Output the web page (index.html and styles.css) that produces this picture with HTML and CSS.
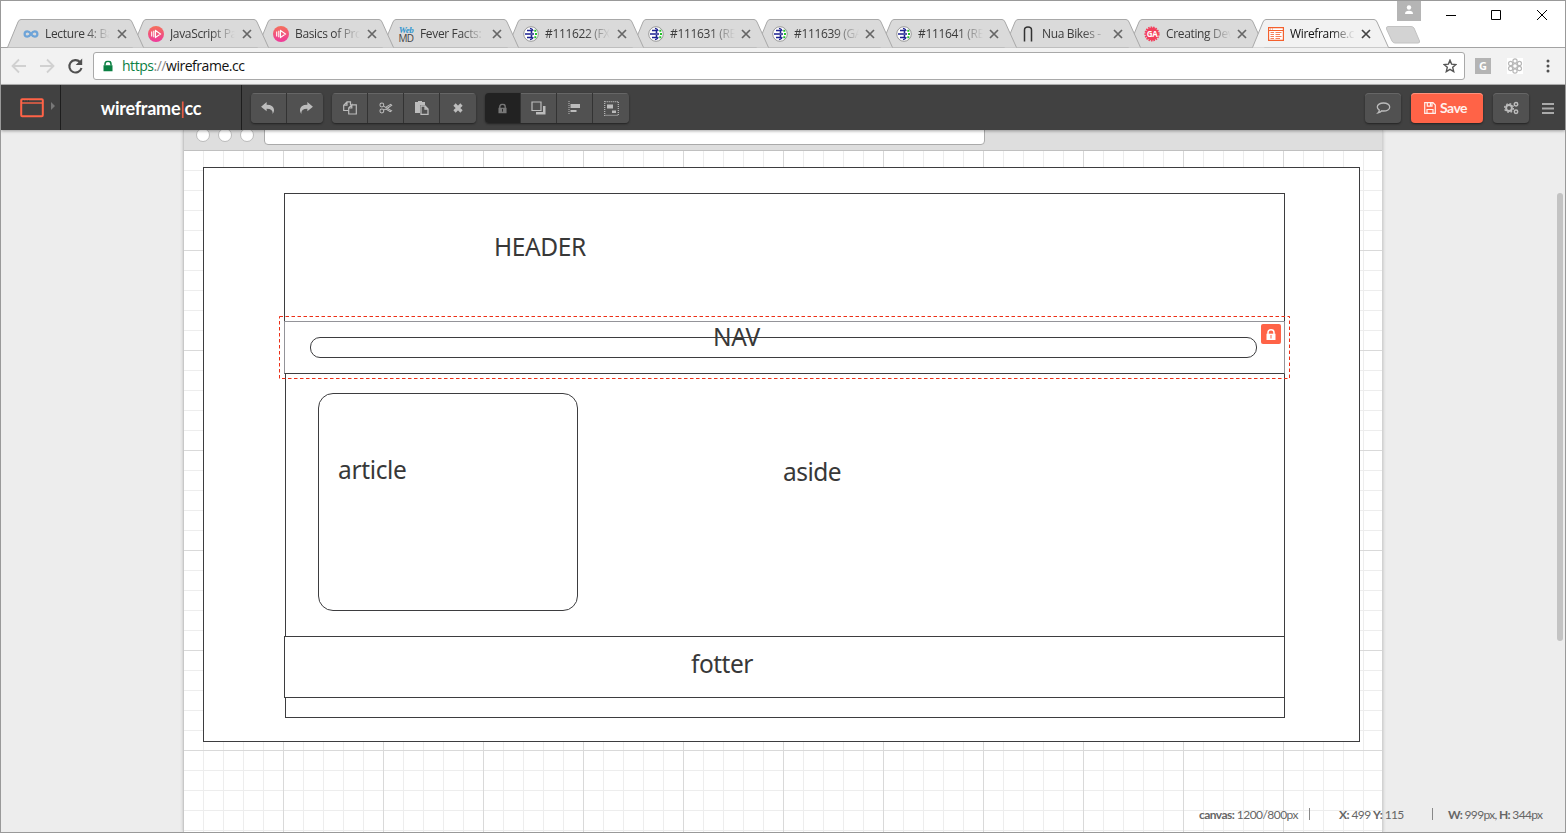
FILE: index.html
```
<!DOCTYPE html>
<html lang="en">
<head>
<meta charset="utf-8">
<title>Wireframe.cc</title>
<link rel="stylesheet" href="styles.css">
</head>
<body>
<svg class="defs" width="0" height="0">
  <defs>
    <linearGradient id="pink" x1="0" y1="0" x2="0" y2="1"><stop offset="0" stop-color="#f5705a"/><stop offset="1" stop-color="#ee3a9c"/></linearGradient>
    <symbol id="tabshape" viewBox="0 0 138 29"><path d="M.5 28.500L11 3Q12 .5 14 .5H122Q124 .5 125 3L136.500 28.500"/></symbol>
    <symbol id="close" viewBox="0 0 10 10"><path d="M1 1L9 9M9 1L1 9" fill="none" stroke="currentColor" stroke-width="1.700"/></symbol>
    <symbol id="play" viewBox="0 0 16 16"><circle cx="8" cy="8" r="8" fill="url(#pink)"/><path d="M3.700 5.500V10.500M5.800 4.800V11.200M7.500 4.500L12.500 8L7.500 11.500Z" fill="none" stroke="#fff" stroke-width="1.100"/></symbol>
    <symbol id="plug" viewBox="0 0 16 16"><circle cx="8" cy="8" r="7.300" fill="#fff" stroke="#999" stroke-width="1"/><path d="M4 4.500H8.500V7M2 8H11M4 11.500H8.500V9" fill="none" stroke="#1d2290" stroke-width="1.600"/><path d="M7 2.300Q10 3 10 5M7 13.700Q10 13 10 11" fill="none" stroke="#1d2290" stroke-width="1.200"/><path d="M11.300 4.800H13.300M12 8H14M11.300 11.200H13.300" stroke="#25c02b" stroke-width="2"/></symbol>
    <symbol id="reply" viewBox="0 0 16 14"><path d="M0 5L6 0V3Q14 3 14 9Q14 11 12.500 13Q13 7.200 6 7.200V10Z"/></symbol>
    <symbol id="lock" viewBox="0 0 10 11"><path d="M2 5V3.500Q2 .8 5 .8T8 3.500V5" fill="none" stroke="currentColor" stroke-width="1.500"/><path d="M.5 4.700H9.500V11H.5Z" fill="currentColor"/></symbol>
  </defs>
</svg>
<div class="window">
  <header class="titlebar">
    <nav class="tabs">
      <div class="tab z11"><svg class="shape"><use href="#tabshape"/></svg><svg class="fav" viewBox="0 0 16 16"><path d="M8 8C6.800 6.300 6 5.300 4.300 5.300A2.700 2.700 0 0 0 4.300 10.700C6 10.700 6.800 9.700 8 8S10 5.300 11.700 5.300A2.700 2.700 0 0 1 11.700 10.700C10 10.700 9.200 9.700 8 8Z" fill="none" stroke="#6ea4d8" stroke-width="2.200"/></svg><span class="label">Lecture 4: Ba</span><svg class="x"><use href="#close"/></svg></div>
      <div class="tab z10"><svg class="shape"><use href="#tabshape"/></svg><svg class="fav"><use href="#play"/></svg><span class="label">JavaScript Pa</span><svg class="x"><use href="#close"/></svg></div>
      <div class="tab z9"><svg class="shape"><use href="#tabshape"/></svg><svg class="fav"><use href="#play"/></svg><span class="label">Basics of Pro</span><svg class="x"><use href="#close"/></svg></div>
      <div class="tab z8"><svg class="shape"><use href="#tabshape"/></svg><span class="webmd"><i>Web</i><b>MD</b></span><span class="label">Fever Facts:</span><svg class="x"><use href="#close"/></svg></div>
      <div class="tab z7"><svg class="shape"><use href="#tabshape"/></svg><svg class="fav"><use href="#plug"/></svg><span class="label">#111622 (FX</span><svg class="x"><use href="#close"/></svg></div>
      <div class="tab z6"><svg class="shape"><use href="#tabshape"/></svg><svg class="fav"><use href="#plug"/></svg><span class="label">#111631 (RE</span><svg class="x"><use href="#close"/></svg></div>
      <div class="tab z5"><svg class="shape"><use href="#tabshape"/></svg><svg class="fav"><use href="#plug"/></svg><span class="label">#111639 (GA</span><svg class="x"><use href="#close"/></svg></div>
      <div class="tab z4"><svg class="shape"><use href="#tabshape"/></svg><svg class="fav"><use href="#plug"/></svg><span class="label">#111641 (RE</span><svg class="x"><use href="#close"/></svg></div>
      <div class="tab z3"><svg class="shape"><use href="#tabshape"/></svg><svg class="fav" viewBox="0 0 16 16"><path d="M4.500 15.500V4Q4.500 1 8 1T11.500 4V15.500" fill="none" stroke="#333" stroke-width="1.500"/></svg><span class="label">Nua Bikes -</span><svg class="x"><use href="#close"/></svg></div>
      <div class="tab z2"><svg class="shape"><use href="#tabshape"/></svg><span class="ga"><svg viewBox="0 0 16 16"><circle cx="8" cy="8" r="6.500" fill="#f33e5b"/><circle cx="8" cy="8" r="6.700" fill="none" stroke="#f33e5b" stroke-width="1.800" stroke-dasharray="1.500 1"/></svg><b>GA</b></span><span class="label">Creating Dev</span><svg class="x"><use href="#close"/></svg></div>
      <div class="tab active"><svg class="shape"><use href="#tabshape"/></svg><svg class="fav" viewBox="0 0 16 16"><path d="M.6 1.600H15.400V14.400H.6Z" fill="#fff" stroke="#f4602d" stroke-width="1.200"/><path d="M.6 4.500H15.400" stroke="#f4602d"/><path d="M2 3H3M4 3H5M2.500 6.500H6M2.500 8.500H6M2.500 10.500H6M2.500 12.500H6M7.500 6.500H13.500M7.500 8.500H12M7.500 10.500H13.500M7.500 12.500H12" stroke="#f4602d" stroke-width=".8"/></svg><span class="label">Wireframe.cc</span><svg class="x"><use href="#close"/></svg></div>
    </nav>
    <svg class="newtab" viewBox="0 0 36 18"><path d="M3 .5H26Q28 .5 29 2L34.500 15Q35 17 33 17H10Q8 17 7 15L1.500 3Q1 .5 3 .5Z" fill="#d3d3d3" stroke="#c2c2c2"/></svg>
    <div class="profile"><svg width="12" height="12" viewBox="0 0 12 12"><circle cx="6" cy="3.500" r="2.200" fill="#fff"/><path d="M2 10Q2 6.800 6 6.800T10 10Z" fill="#fff"/></svg></div>
    <svg class="winctl" width="104" height="12" viewBox="0 0 104 12" fill="none" stroke="#000"><path d="M0 6.500H10M91 1L101 11M101 1L91 11"/><path d="M45.500 1.500H54.500V10.500H45.500Z"/></svg>
  </header>
  <div class="toolbar">
    <svg class="nav" width="74" height="18" viewBox="0 0 74 18" fill="none"><path d="M15 9H2M8 2.500L1.500 9L8 15.500M29 9H42M36 2.500L42.500 9L36 15.500" stroke="#d1d1d1" stroke-width="1.800"/><path d="M69 5A6.200 6.200 0 1 0 70.500 11" stroke="#505050" stroke-width="2.100"/><path d="M71.200 1.500V8H64.700Z" fill="#505050"/></svg>
    <div class="omnibox">
      <svg width="10" height="12" viewBox="0 0 10 11" class="securelock"><use href="#lock"/></svg>
      <span class="url"><em>https</em><i>://</i>wireframe.cc</span>
      <svg class="star" width="14" height="14" viewBox="0 0 14 14"><path d="M7 1.200L8.600 5.100L13 5.500L9.700 8.300L10.700 12.600L7 10.300L3.300 12.600L4.300 8.300L1 5.500L5.400 5.100Z" fill="none" stroke="#555" stroke-width="1.400"/></svg>
    </div>
    <span class="gext">G</span>
    <span class="flower"><svg width="16" height="16" viewBox="0 0 16 16" fill="none" stroke="#b8b8b8" stroke-width="1.200"><circle cx="8" cy="8" r="2.400"/><circle cx="8" cy="3" r="2.100"/><circle cx="8" cy="13" r="2.100"/><circle cx="3.600" cy="5.500" r="2.100"/><circle cx="12.400" cy="5.500" r="2.100"/><circle cx="3.600" cy="10.500" r="2.100"/><circle cx="12.400" cy="10.500" r="2.100"/></svg></span>
    <svg class="dots" width="4" height="14" viewBox="0 0 4 14" fill="#505050"><circle cx="2" cy="2" r="1.500"/><circle cx="2" cy="7" r="1.500"/><circle cx="2" cy="12" r="1.500"/></svg>
  </div>
  <div class="appbar">
    <div class="device"><svg width="36" height="20" viewBox="0 0 36 20"><rect x="1.200" y="1.200" width="21.600" height="17" rx="1" fill="none" stroke="#ff6347" stroke-width="2"/><path d="M1 5H23" stroke="#ff6347" stroke-width="1.400"/><path d="M3 3H4M5.500 3H6.500M8 3H9" stroke="#333"/><path d="M31 4L35 8L31 12Z" fill="#777"/></svg></div>
    <div class="logo">wireframe<i>|</i>cc</div>
    <div class="groups">
      <div class="group">
        <button class="btn"><svg width="15" height="13" viewBox="0 0 15 13"><use href="#reply" width="15" height="13"/></svg></button>
        <button class="btn"><svg class="flip" width="15" height="13" viewBox="0 0 15 13"><use href="#reply" width="15" height="13"/></svg></button>
      </div>
      <div class="group">
        <button class="btn"><svg width="14" height="14" viewBox="0 0 14 14" fill="none" stroke="currentColor" stroke-width="1.200"><path d="M5.500 9.500H.7V4.200L4 .9H7.500V4M4 1V4.200H.7"/><path d="M8.800 3.800H13.300V13H5.700V7L8.800 3.800V7H5.700"/></svg></button>
        <button class="btn"><svg width="14" height="12" viewBox="0 0 15 13" fill="none" stroke="currentColor" stroke-width="1.100"><circle cx="3" cy="3.200" r="2.100"/><circle cx="3" cy="9.800" r="2.100"/><path d="M4.800 4.500L13.500 9.500L12 10.500L7.500 7.700L4.800 8.800M7.500 5.500L12.500 2.500L13.700 3.400L9 6.800"/></svg></button>
        <button class="btn"><svg width="14" height="14" viewBox="0 0 14 14"><path d="M0 1H3V0H7V1H10V4H5V12H0Z"/><path d="M6 5H10L13 8V13.300H6ZM10 5V8H13" fill="#505050" stroke="currentColor" stroke-width="1.300"/></svg></button>
        <button class="btn"><svg width="10" height="10" viewBox="0 0 10 10"><path d="M1.500 1.500L8.500 8.500M8.500 1.500L1.500 8.500" stroke="currentColor" stroke-width="3.200"/></svg></button>
      </div>
      <div class="group">
        <button class="btn pressed"><svg width="9" height="11" viewBox="0 0 10 11"><use href="#lock"/><path d="M5 6V9" stroke="#222"/></svg></button>
        <button class="btn"><svg width="15" height="14" viewBox="0 0 15 14"><path d="M1 1H10V9.500H1Z" fill="none" stroke="currentColor" stroke-width="1.200"/><path d="M12 5H14.500V13.500H5V11H12Z"/></svg></button>
        <button class="btn"><svg width="13" height="14" viewBox="0 0 13 14"><path d="M1 0V14" stroke="currentColor" stroke-dasharray="1 1"/><path d="M2.500 3H12V7H2.500ZM2.500 9H8.500V11H2.500Z"/></svg></button>
        <button class="btn"><svg width="15" height="15" viewBox="0 0 15 15"><rect x=".7" y=".7" width="13.600" height="13.600" fill="none" stroke="currentColor" stroke-width="1.200" stroke-dasharray="1 1"/><path d="M3 3.500H9V7.500H3ZM8 9.500H12V12H8Z"/></svg></button>
      </div>
    </div>
    <div class="right">
      <button class="btn solo"><svg width="15" height="12" viewBox="0 0 15 12"><path d="M7.500 1C11 1 13.700 2.700 13.700 5S11 9 7.500 9Q6.500 9 5.800 8.800Q4.300 10.500 2 10.900Q3.400 9.500 3.300 8Q1.300 6.800 1.300 5C1.300 2.700 4 1 7.500 1Z" fill="none" stroke="currentColor" stroke-width="1.300"/></svg></button>
      <button class="save"><svg width="12" height="12" viewBox="0 0 12 12" fill="none" stroke="currentColor" stroke-width="1.200"><path d="M.7.7H9L11.300 3V11.300H.7ZM3 11V7.500H9V11M3.300 1V4.200H8V1M6.500 1V3.500"/></svg>Save</button>
      <button class="btn solo"><svg width="15" height="14" viewBox="0 0 15 14" fill="none" stroke="currentColor"><circle cx="5" cy="7" r="2.900" stroke-width="2"/><circle cx="5" cy="7" r="4.400" stroke-width="1.300" stroke-dasharray="1.700 1.750"/><circle cx="12" cy="3.200" r="1.700" stroke-width="1.500"/><circle cx="12" cy="10.800" r="1.700" stroke-width="1.500"/></svg></button>
      <svg class="menu" width="12" height="11" viewBox="0 0 12 11"><path d="M0 1H12M0 5.500H12M0 10H12" stroke="#aaa" stroke-width="1.800"/></svg>
    </div>
  </div>
  <main class="workspace">
    <section class="canvas">
      <div class="chrome"><span class="dot"></span><span class="dot"></span><span class="dot"></span><span class="field"></span></div>
      <div class="box page"></div>
      <div class="box header"></div>
      <div class="box content"></div>
      <div class="box navbox"></div>
      <div class="box footer"></div>
      <div class="box pill"></div>
      <div class="box article"></div>
      <svg class="selection" width="1011" height="63"><rect x=".5" y=".5" width="1010" height="62" fill="none" stroke="#ec2f17" stroke-dasharray="3.500 2.500"/></svg>
      <span class="badge"><svg width="10" height="11" viewBox="0 0 10 11"><use href="#lock"/><path d="M5 6V9.500" stroke="#ff6347"/></svg></span>
      <span class="text t-header">HEADER</span>
      <span class="text t-nav">NAV</span>
      <span class="text t-article">article</span>
      <span class="text t-aside">aside</span>
      <span class="text t-footer">fotter</span>
    </section>
    <div class="scroll"></div>
    <footer class="status"><span class="s1"><b>canvas:</b> 1200/800px</span><span class="s2"><b>X:</b> 499 <b>Y:</b> 115</span><span class="s3"><b>W:</b> 999px, <b>H:</b> 344px</span></footer>
  </main>
</div>
</body>
</html>
```
FILE: styles.css
```
* { box-sizing: border-box; }
body { margin: 0; font-family: "Open Sans", "Noto Sans", sans-serif; }
button { font: inherit; margin: 0; padding: 0; border: 0; }
svg { display: block; flex: none; }
.defs { position: absolute; }
.window { width: 1566px; height: 833px; border: 1px solid #999; background: #fff; display: flex; flex-direction: column; overflow: hidden; }

.titlebar { position: relative; height: 47px; flex: none; padding: 18px 0 0 6px; box-shadow: inset 0 -1px #a3a3a3; }
.tabs { display: flex; }
.tab { position: relative; isolation: isolate; flex: none; width: 125px; height: 29px; padding-left: 16px; display: flex; align-items: center; color: #3b3b3b; font-size: 12px; }
.tab:nth-child(n+6) { width: 124px; }
.shape { position: absolute; left: 0; top: 0; width: 138px; height: 29px; z-index: -1; fill: #dadada; stroke: #a8a8a8; }
.z11 { z-index: 11; } .z10 { z-index: 10; } .z9 { z-index: 9; } .z8 { z-index: 8; } .z7 { z-index: 7; } .z6 { z-index: 6; }
.z5 { z-index: 5; } .z4 { z-index: 4; } .z3 { z-index: 3; } .z2 { z-index: 2; }
.tab.active { z-index: 12; color: #111; }
.active .shape { fill: #f2f2f2; }
.fav { width: 16px; height: 16px; }
.label { width: 72px; margin-left: 6px; white-space: nowrap; line-height: 17px; letter-spacing: -.35px; -webkit-mask-image: linear-gradient(90deg, #000 40px, transparent 65px); mask-image: linear-gradient(90deg, #000 40px, transparent 65px); }
.tab:nth-child(n+6) .label { width: 71px; }
.x { width: 10px; height: 10px; color: #666; }
.active .x { color: #444; }
.webmd { width: 16px; display: flex; flex-direction: column; align-items: center; font: 10px/8px "Open Sans", sans-serif; letter-spacing: -.5px; color: #444; }
.webmd i { font: italic 700 9px/8px "Liberation Serif", serif; color: #2f95d0; }
.webmd b { font-weight: 400; line-height: 8px; }
.ga { position: relative; width: 16px; height: 16px; }
.ga b { position: absolute; left: 0; top: 0; width: 16px; text-align: center; font: 700 8px/16px "Open Sans", sans-serif; letter-spacing: -.5px; color: #fff; }
.newtab { position: absolute; left: 1384px; top: 25px; width: 36px; height: 18px; }
.profile { position: absolute; left: 1396px; top: 0; width: 24px; height: 20px; background: #b5b5b5; display: flex; justify-content: center; padding-top: 3px; }
.winctl { position: absolute; left: 1445px; top: 8px; }

.toolbar { height: 37px; flex: none; background: #f2f2f2; border-bottom: 1px solid #b5b5b5; display: flex; align-items: center; padding: 0 15px 0 10px; }
.omnibox { margin-left: 8px; width: 1372px; height: 28px; background: #fff; border: 1px solid #a9a9a9; border-radius: 3px; display: flex; align-items: center; padding: 0 7px 0 9px; }
.securelock { color: #0b8043; }
.url { margin-left: 9px; font-size: 14px; line-height: 20px; letter-spacing: -.47px; flex: 1; color: #111; }
.url em { font-style: normal; color: #0b8043; }
.url i { font-style: normal; color: #888; }
.gext { margin-left: 10px; width: 16px; height: 16px; background: #b4b4b4; color: #fff; font: 700 11px/16px "Open Sans", sans-serif; text-align: center; }
.flower { margin-left: 16px; background: #fff; }
.dots { margin-left: auto; }

.appbar { position: relative; z-index: 2; height: 45px; flex: none; background: #414141; display: flex; align-items: stretch; box-shadow: 0 1px 3px rgba(0,0,0,.35); }
.device { width: 60px; border-right: 1px solid #1d1d1d; padding: 13px 0 0 19px; }
.logo { width: 181px; border-right: 1px solid #1d1d1d; text-align: center; font: 700 18px/46px Lato, sans-serif; letter-spacing: -.25px; color: #fff; }
.logo i { font-style: normal; font-weight: 400; color: #ff6347; }
.groups { display: flex; gap: 9px; padding: 8px 0 0 9px; }
.group { display: flex; height: 30px; border-radius: 4px; overflow: hidden; box-shadow: 0 1px 2px #222; }
.btn { width: 36px; height: 30px; background: #515151; color: #bcbcbc; display: flex; align-items: center; justify-content: center; border-right: 1px solid #333; box-shadow: inset 0 1px #666; }
.btn svg { fill: currentColor; }
.btn svg[fill="none"] { fill: none; }
.btn:last-child { border-right: 0; }
.flip { transform: scaleX(-1); }
.btn.pressed { background: #222; color: #777; box-shadow: none; }
.btn.solo { border: 0; border-radius: 4px; box-shadow: inset 0 1px #666, 0 1px 2px #222; }
.right { margin-left: auto; display: flex; gap: 10px; padding: 8px 11px 0 0; }
.save { width: 72px; height: 30px; border-radius: 4px; background: #ff6347; color: #fff0ec; font: 700 14px/30px Lato, sans-serif; letter-spacing: -.5px; display: flex; align-items: center; justify-content: center; gap: 4px; padding-right: 3px; box-shadow: inset 0 1px #ff927d, 0 1px 2px #222; }
.menu { margin: 10px 0 0 3px; }

.workspace { position: relative; flex: 1; background: #ededed; padding-left: 182px; }
.canvas { position: relative; width: 1200px; height: 702px; border-left: 1px solid #c8c8c8; border-right: 1px solid #d2d2d2; box-shadow: 0 0 3px #bbb; background-color: #fff;
  background-image: linear-gradient(90deg, #d9d9d9 1px, transparent 1px), linear-gradient(#d9d9d9 1px, transparent 1px), linear-gradient(90deg, #ededed 1px, transparent 1px), linear-gradient(#ededed 1px, transparent 1px);
  background-size: 100px 100px, 100px 100px, 20px 20px, 20px 20px; background-position: -1px 20px, -1px 20px, -1px 0, -1px 0; }
.chrome { height: 21px; background: #dedede; border-bottom: 1px solid #c0c0c0; display: flex; gap: 8px; padding-left: 12px; overflow: hidden; }
.dot { width: 14px; height: 14px; margin-top: -2px; border-radius: 50%; background: #fff; border: 1px solid #bbb; }
.field { margin-left: 2px; width: 721px; height: 19px; margin-top: -4px; background: #fff; border: 1px solid #aaa; border-radius: 4px; }
.box { position: absolute; border: 1px solid #3d3d3f; }
.page { left: 19px; top: 37px; width: 1157px; height: 575px; background: #fff; }
.header { left: 100px; top: 63px; width: 1001px; height: 181px; }
.content { left: 101px; top: 243px; width: 1000px; height: 345px; }
.navbox { left: 100px; top: 191px; width: 1001px; height: 53px; border-color: #949499; border-bottom-color: #3d3d3f; background: #fff; }
.footer { left: 100px; top: 506px; width: 1001px; height: 62px; background: #fff; }
.pill { left: 126px; top: 207px; width: 947px; height: 21px; border-radius: 10px; }
.article { left: 134px; top: 263px; width: 260px; height: 218px; border-radius: 15px; }
.selection { position: absolute; left: 95px; top: 186px; }
.badge { position: absolute; left: 1077px; top: 194px; width: 20px; height: 20px; border-radius: 2px; background: #ff6347; color: #fff; display: flex; align-items: center; justify-content: center; }
.text { position: absolute; font-family: "Noto Sans", sans-serif; font-size: 24.500px; line-height: 34px; letter-spacing: -.5px; color: #383838; white-space: nowrap; }
.t-header { left: 310px; top: 100px; letter-spacing: -.4px; }
.t-nav { left: 529px; top: 190px; letter-spacing: -.4px; }
.t-article { left: 154px; top: 323px; letter-spacing: -.35px; }
.t-aside { left: 599px; top: 325px; }
.t-footer { left: 507px; top: 517px; }
.scroll { position: absolute; left: 1556px; top: 63px; width: 6px; height: 448px; border-radius: 3px; background: #c3c3c3; }
.status { position: absolute; right: 6px; bottom: 10px; display: flex; font: 12px/15px Lato, sans-serif; letter-spacing: -.6px; color: #666; white-space: nowrap; }
.status b { font-weight: 700; color: #666; }
.s1, .s2 { background: linear-gradient(#888, #888) right 1px / 1px 12px no-repeat; }
.s1 { width: 111px; letter-spacing: -.55px; }
.s2 { width: 123px; padding-left: 29px; }
.s3 { width: 126px; padding-left: 15px; letter-spacing: -.68px; }
```
